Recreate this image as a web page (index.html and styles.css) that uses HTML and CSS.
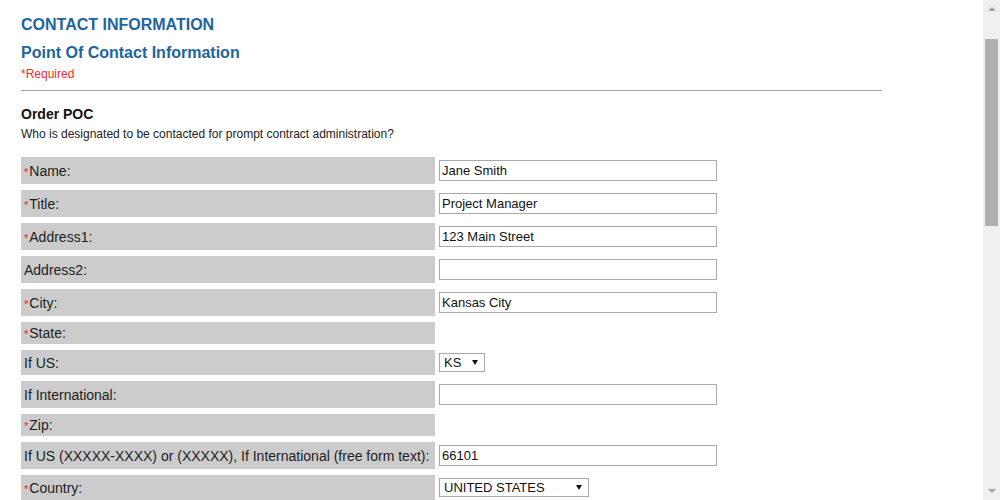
FILE: index.html
```html
<!DOCTYPE html>
<html>
<head>
<meta charset="utf-8">
<link rel="stylesheet" href="styles.css">
</head>
<body>
<div class="page">
  <h1 class="title">CONTACT INFORMATION</h1>
  <h2 class="subtitle">Point Of Contact Information</h2>
  <div class="required">*Required</div>
  <div class="rule"></div>
  <h3 class="section">Order POC</h3>
  <p class="desc">Who is designated to be contacted for prompt contract administration?</p>
  <div class="form">
    <div class="label"><span><span class="ast">*</span>Name:</span></div>
    <div class="field"><input class="text" type="text" value="Jane Smith"></div>
    <div class="label"><span><span class="ast">*</span>Title:</span></div>
    <div class="field"><input class="text" type="text" value="Project Manager"></div>
    <div class="label"><span><span class="ast">*</span>Address1:</span></div>
    <div class="field"><input class="text" type="text" value="123 Main Street"></div>
    <div class="label"><span>Address2:</span></div>
    <div class="field"><input class="text" type="text" value=""></div>
    <div class="label"><span><span class="ast">*</span>City:</span></div>
    <div class="field"><input class="text" type="text" value="Kansas City"></div>
    <div class="label"><span><span class="ast">*</span>State:</span></div>
    <div class="field"></div>
    <div class="label"><span>If US:</span></div>
    <div class="field"><span class="sel sel-short"><select class="select"><option>KS</option></select><span class="arrow"></span></span></div>
    <div class="label"><span>If International:</span></div>
    <div class="field"><input class="text" type="text" value=""></div>
    <div class="label"><span><span class="ast">*</span>Zip:</span></div>
    <div class="field"></div>
    <div class="label"><span>If US (XXXXX-XXXX) or (XXXXX), If International (free form text):</span></div>
    <div class="field"><input class="text" type="text" value="66101"></div>
    <div class="label"><span><span class="ast">*</span>Country:</span></div>
    <div class="field"><span class="sel sel-long"><select class="select"><option>UNITED STATES</option></select><span class="arrow"></span></span></div>
  </div>
</div>
<div class="scrollbar">
  <div class="sb-up"></div>
  <div class="sb-thumb"></div>
  <div class="sb-down"></div>
</div>
</body>
</html>
```
FILE: styles.css
```css
html, body {
  margin: 0;
  padding: 0;
  overflow: hidden;
  background: #ffffff;
}
body {
  font-family: "Liberation Sans", Arial, sans-serif;
  color: #222222;
}
.page {
  width: 861px;
  padding: 15px 0 40px 21px;
}
.title {
  margin: 0;
  font-size: 16px;
  line-height: 20px;
  font-weight: bold;
  color: #1c65a0;
}
.subtitle {
  margin: 8px 0 0;
  font-size: 16px;
  line-height: 20px;
  font-weight: bold;
  color: #1c65a0;
}
.required {
  margin-top: 3px;
  font-size: 12px;
  line-height: 16px;
  color: #ef2a36;
}
.rule {
  margin-top: 8px;
  height: 1px;
  background: #a3a3a3;
}
.section {
  margin: 14px 0 0;
  font-size: 14px;
  line-height: 18px;
  font-weight: bold;
  color: #111111;
}
.desc {
  margin: 3px 0 0;
  font-size: 12px;
  line-height: 16px;
  color: #222222;
}
.form {
  margin-top: 15px;
  display: grid;
  grid-template-columns: 414px 300px;
  column-gap: 4px;
  row-gap: 6px;
}
.label {
  background: #cccccc;
  padding: 3px 3px;
  font-size: 14px;
  line-height: 16px;
  display: flex;
  align-items: center;
  white-space: nowrap;
  color: #222222;
}
.label > span {
  display: block;
  height: 16px;
  line-height: 16px;
  overflow: visible;
}
.ast {
  color: #e8232e;
  font-size: 11px;
  line-height: 11px;
  margin-right: 1px;
}
.field {
  padding: 3px 0;
  display: flex;
  align-items: center;
}
.text {
  box-sizing: border-box;
  width: 278px;
  height: 21px;
  margin: 0;
  border: 1px solid #a9a9a9;
  padding: 0 2px;
  font-family: "Liberation Sans", Arial, sans-serif;
  font-size: 13px;
  color: #111111;
  background: #ffffff;
  outline: none;
}
.sel {
  position: relative;
  display: inline-block;
}
.select {
  -webkit-appearance: none;
  appearance: none;
  box-sizing: border-box;
  height: 19px;
  margin: 0;
  border: 1px solid #a9a9a9;
  border-radius: 0;
  padding: 0 0 0 4px;
  font-family: "Liberation Sans", Arial, sans-serif;
  font-size: 13px;
  line-height: 17px;
  color: #111111;
  background: #ffffff;
  display: block;
}
.sel-short .select { width: 46px; }
.sel-long .select { width: 150px; }
.arrow {
  position: absolute;
  top: 7px;
  right: 7px;
  width: 0;
  height: 0;
  border-left: 3px solid transparent;
  border-right: 3px solid transparent;
  border-top: 5px solid #111111;
}
.scrollbar {
  position: fixed;
  top: 0;
  right: 0;
  width: 17px;
  height: 500px;
  background: #f0f0f0;
}
.sb-thumb {
  position: absolute;
  left: 2px;
  top: 39px;
  width: 13px;
  height: 187px;
  background: #b0b0b0;
}
.sb-up, .sb-down {
  position: absolute;
  left: 5px;
  width: 0;
  height: 0;
  border-left: 4px solid transparent;
  border-right: 4px solid transparent;
}
.sb-up {
  top: 7px;
  border-bottom: 4px solid #a3a3a3;
}
.sb-down {
  top: 489px;
  border-top: 4px solid #a3a3a3;
}
```
